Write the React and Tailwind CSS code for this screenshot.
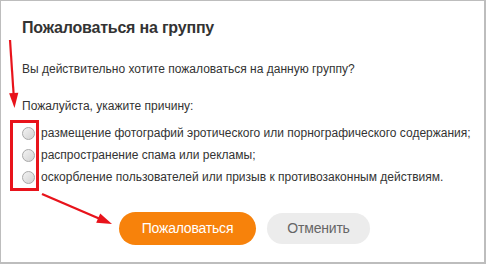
import React from 'react'

const reasons = [
  'размещение фотографий эротического или порнографического содержания;',
  'распространение спама или рекламы;',
  'оскорбление пользователей или призыв к противозаконным действиям.',
]

function Radio() {
  return (
    <span className="block h-[13px] w-[13px] shrink-0 rounded-full border border-[#a9a9a9] bg-gradient-to-br from-[#f3f3f3] to-[#d2d2d2]" />
  )
}

function Annotations() {
  return (
    <svg className="pointer-events-none absolute left-0 top-0" width="486" height="264" viewBox="0 0 486 264">
      <line x1="10" y1="40" x2="13.6" y2="94" stroke="#e8131b" strokeWidth="2.2" />
      <polygon points="14.5,108 18.3,92.7 9.1,93.3" fill="#e8131b" />
      <rect x="11.5" y="121.5" width="26" height="68" fill="none" stroke="#e8131b" strokeWidth="3" />
      <line x1="42" y1="194" x2="99" y2="218.5" stroke="#e8131b" strokeWidth="2.4" />
      <polygon points="112,224 96.2,222.7 100.2,213.5" fill="#e8131b" />
    </svg>
  )
}

export default function App() {
  return (
    <div className="relative h-[264px] w-[486px] overflow-hidden bg-white font-['Liberation_Sans',Arial,sans-serif] text-[#333]">
      <div className="h-full w-full border border-[#bdbdbd] border-b-2 border-r-2 pl-[21px] pt-[16px]">
        <h2 className="text-[16px] font-bold leading-[22px] tracking-[-0.2px] text-[#333]">Пожаловаться на группу</h2>
        <p className="mt-[22px] text-[12px] leading-4">Вы действительно хотите пожаловаться на данную группу?</p>
        <p className="mt-[21px] text-[12px] leading-4">Пожалуйста, укажите причину:</p>
        <div className="mt-[11px] flex flex-col gap-[6px]">
          {reasons.map(r => (
            <label key={r} className="flex items-center gap-[6px] text-[12px] leading-4">
              <Radio />
              <span className="whitespace-nowrap">{r}</span>
            </label>
          ))}
        </div>
        <div className="ml-[97px] mt-[27px] flex items-center gap-[11px]">
          <button type="button" className="h-[33px] w-[137px] rounded-full bg-[#f7820b] text-[14px] tracking-[-0.2px] text-white">
            Пожаловаться
          </button>
          <button type="button" className="h-[31px] w-[103px] rounded-full bg-[#ececec] text-[14px] tracking-[-0.2px] text-[#666]">
            Отменить
          </button>
        </div>
      </div>
      <Annotations />
    </div>
  )
}
